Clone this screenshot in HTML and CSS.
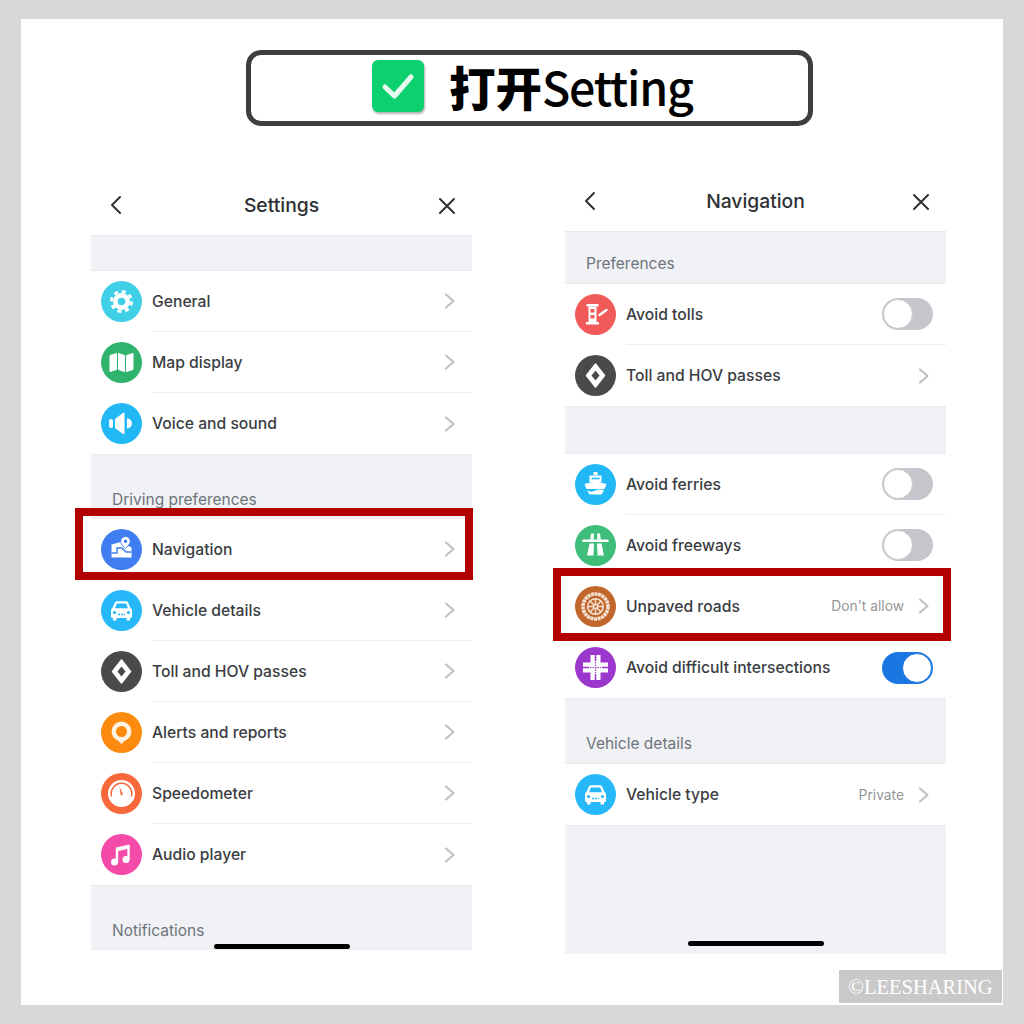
FILE: index.html
```html
<!DOCTYPE html>
<html lang="zh">
<head>
  <meta charset="UTF-8" />
  <title>打开Setting</title>
  <link rel="stylesheet" href="styles.css">
</head>
<body>
  <svg class="defs" width="0" height="0">
    <symbol id="chev" viewBox="0 0 12 18"><path d="M2 2.500l7.500 6.500-7.500 6.500" fill="none" stroke="#c0c1c5" stroke-width="2.200" stroke-linecap="round" stroke-linejoin="round"/></symbol>
    <symbol id="toll" viewBox="0 0 41 41"><circle cx="20.500" cy="20.500" r="20.500" fill="#4a4a4a"/><path d="M20.500 9l9 11.500-9 11.500-9-11.500z" fill="#fff" stroke="#fff" stroke-width="1.500" stroke-linejoin="round"/><path d="M20.500 15.500l4 5-4 5-4-5z" fill="#4a4a4a"/></symbol>
    <symbol id="car" viewBox="0 0 41 41"><circle cx="20.500" cy="20.500" r="20.500" fill="#26b8f8"/><path d="M11.500 18l2.200-5c.4-1 1.200-1.700 2.300-1.700h9c1.100 0 1.900.7 2.300 1.700l2.200 5c1.200.5 1.500 1.500 1.500 3v5.500c0 1-.5 1.500-1.500 1.500h-18c-1 0-1.500-.5-1.500-1.500V21c0-1.500.3-2.500 1.500-3z" fill="#fff"/><path d="M14 18.300l1.800-4.800h9.400l1.800 4.800z" fill="#26b8f8"/><path d="M12 28h3.500v2.500H12zM25.500 28H29v2.500h-3.500z" fill="#fff"/><circle cx="13.500" cy="22.500" r="1.600" fill="#26b8f8"/><circle cx="27.500" cy="22.500" r="1.600" fill="#26b8f8"/><path d="M17 24.500h7" stroke="#26b8f8" stroke-width="1.400" stroke-dasharray="2 1"/></symbol>
  </svg>

  <div class="sheet">
    <div class="banner">
      <span class="tick">
        <svg width="52" height="52" viewBox="0 0 52 52"><path d="M13 27l9.500 9L39 17" fill="none" stroke="#e6f9ee" stroke-width="5" stroke-linecap="round" stroke-linejoin="round"/></svg>
      </span>
      <span class="banner-text"><b>打开</b><span class="banner-en">Setting</span></span>
    </div>

    <div class="phones">
      <!-- left screen -->
      <div class="phone phone-left">
        <div class="top">
          <svg class="back" width="12" height="20" viewBox="0 0 12 20"><path d="M10 2L2 10l8 8" fill="none" stroke="#2e3034" stroke-width="2" stroke-linecap="round" stroke-linejoin="round"/></svg>
          <span class="top-title">Settings</span>
          <svg class="close" width="18" height="18" viewBox="0 0 18 18"><path d="M2 2l14 14M16 2L2 16" fill="none" stroke="#2e3034" stroke-width="2" stroke-linecap="round"/></svg>
        </div>
        <div class="band band-empty"></div>
        <div class="row">
          <svg class="ico" viewBox="0 0 41 41"><circle cx="20.500" cy="20.500" r="20.500" fill="#3fd0e8"/><circle cx="20.500" cy="20.500" r="8.500" fill="#fff"/><circle cx="20.500" cy="20.500" r="10" fill="none" stroke="#fff" stroke-width="3" stroke-dasharray="4 3.850"/><circle cx="20.500" cy="20.500" r="3.800" fill="#3fd0e8"/></svg>
          <div class="row-body"><span class="name">General</span><svg class="chev"><use href="#chev"/></svg></div>
        </div>
        <div class="row">
          <svg class="ico" viewBox="0 0 41 41"><circle cx="20.500" cy="20.500" r="20.500" fill="#2fb36d"/><path d="M9 13.500l6.500-2v16l-6.500 2zM17.500 11.500l6 2v16l-6-2zM25.500 13.500l6.500-2v16l-6.500 2z" fill="#fff" stroke="#fff" stroke-linejoin="round"/></svg>
          <div class="row-body"><span class="name">Map display</span><svg class="chev"><use href="#chev"/></svg></div>
        </div>
        <div class="row row-last">
          <svg class="ico" viewBox="0 0 41 41"><circle cx="20.500" cy="20.500" r="20.500" fill="#22b8f6"/><rect x="8" y="16" width="4" height="9" rx="2" fill="#fff"/><path d="M14 16l8-6c.7-.5 1.500-.1 1.500.8v19.400c0 .9-.8 1.300-1.500.8l-8-6z" fill="#fff"/><path d="M26 15.500a5 5 0 0 1 0 10z" fill="#fff"/></svg>
          <div class="row-body"><span class="name">Voice and sound</span><svg class="chev"><use href="#chev"/></svg></div>
        </div>
        <div class="band band-tall"><span class="band-label">Driving preferences</span></div>
        <div class="row">
          <svg class="ico" viewBox="0 0 41 41"><circle cx="20.500" cy="20.500" r="20.500" fill="#3f7df0"/><path d="M10.500 15.500l9.500-2.500 10.500 5.500v10h-20z" fill="#fff"/><path d="M10.500 24H16v-5h5l4 4h5.500" fill="none" stroke="#3f7df0" stroke-width="1.400"/><path d="M24.500 7.500a4.800 4.800 0 0 1 4.800 4.800c0 3-4.800 7.200-4.800 7.200s-4.800-4.200-4.800-7.200a4.800 4.800 0 0 1 4.800-4.800z" fill="#fff" stroke="#3f7df0"/><circle cx="24.500" cy="12.300" r="1.700" fill="#3f7df0"/></svg>
          <div class="row-body"><span class="name">Navigation</span><svg class="chev"><use href="#chev"/></svg></div>
          <div class="mark"></div>
        </div>
        <div class="row">
          <svg class="ico"><use href="#car"/></svg>
          <div class="row-body"><span class="name">Vehicle details</span><svg class="chev"><use href="#chev"/></svg></div>
        </div>
        <div class="row">
          <svg class="ico"><use href="#toll"/></svg>
          <div class="row-body"><span class="name">Toll and HOV passes</span><svg class="chev"><use href="#chev"/></svg></div>
        </div>
        <div class="row">
          <svg class="ico" viewBox="0 0 41 41"><circle cx="20.500" cy="20.500" r="20.500" fill="#fb8a0e"/><path d="M20.500 9.500a10 10 0 0 1 3 19.500l-3 3-3-3a10 10 0 0 1 3-19.500z" fill="#fff3e3"/><circle cx="20.500" cy="19.500" r="5.500" fill="#fb8a0e"/></svg>
          <div class="row-body"><span class="name">Alerts and reports</span><svg class="chev"><use href="#chev"/></svg></div>
        </div>
        <div class="row">
          <svg class="ico" viewBox="0 0 41 41"><circle cx="20.500" cy="20.500" r="20.500" fill="#f7693a"/><circle cx="20.500" cy="20.500" r="13.500" fill="#fff"/><path d="M10.600 23.500a10.300 10.300 0 1 1 19.800 0" fill="none" stroke="#f7693a" stroke-width="1.500"/><path d="M18.500 13.500l3.500 8-2.200 1z" fill="#f7693a"/></svg>
          <div class="row-body"><span class="name">Speedometer</span><svg class="chev"><use href="#chev"/></svg></div>
        </div>
        <div class="row row-last">
          <svg class="ico" viewBox="0 0 41 41"><circle cx="20.500" cy="20.500" r="20.500" fill="#f54ba8"/><path d="M15 13.500l13.500-3v4l-13.500 3z" fill="#fff"/><path d="M16 15v13M27.500 12v13" stroke="#fff" stroke-width="2.400"/><circle cx="13.500" cy="28" r="3.500" fill="#fff"/><circle cx="25" cy="25.500" r="3.500" fill="#fff"/></svg>
          <div class="row-body"><span class="name">Audio player</span><svg class="chev"><use href="#chev"/></svg></div>
        </div>
        <div class="band band-tall"><span class="band-label">Notifications</span></div>
        <div class="home"></div>
      </div>

      <!-- right screen -->
      <div class="phone phone-right">
        <div class="top">
          <svg class="back" width="12" height="20" viewBox="0 0 12 20"><path d="M10 2L2 10l8 8" fill="none" stroke="#2e3034" stroke-width="2" stroke-linecap="round" stroke-linejoin="round"/></svg>
          <span class="top-title">Navigation</span>
          <svg class="close" width="18" height="18" viewBox="0 0 18 18"><path d="M2 2l14 14M16 2L2 16" fill="none" stroke="#2e3034" stroke-width="2" stroke-linecap="round"/></svg>
        </div>
        <div class="band band-pref"><span class="band-label">Preferences</span></div>
        <div class="row">
          <svg class="ico" viewBox="0 0 41 41"><circle cx="20.500" cy="20.500" r="20.500" fill="#f25a5a"/><path d="M11.500 10h12v2.500h-12zM11 28h13v2.500H11z" fill="#fff"/><path d="M13.500 12.500h8V28h-8z" fill="#fff"/><rect x="15.500" y="15" width="4" height="3.500" fill="#f25a5a"/><rect x="15.500" y="21" width="4" height="3.500" fill="#f25a5a"/><path d="M24.500 21l7-5" stroke="#fff" stroke-width="2.400" stroke-linecap="round"/></svg>
          <div class="row-body"><span class="name">Avoid tolls</span><span class="toggle"></span></div>
        </div>
        <div class="row row-last">
          <svg class="ico"><use href="#toll"/></svg>
          <div class="row-body"><span class="name">Toll and HOV passes</span><svg class="chev"><use href="#chev"/></svg></div>
        </div>
        <div class="band band-gap"></div>
        <div class="row">
          <svg class="ico" viewBox="0 0 41 41"><circle cx="20.500" cy="20.500" r="20.500" fill="#22b8f6"/><path d="M18.500 8h4v3h-4z" fill="#fff"/><path d="M14.500 11.500h12v7h-12z" fill="#fff"/><path d="M16.500 14.500h8" stroke="#22b8f6" stroke-width="1.600"/><path d="M9.500 20l11-2.500 11 2.500-2 5h-18z" fill="#fff"/><path d="M12 26.500c3 1.500 5.500 1.500 8.500 0s5.500-1.500 8.500 0l-2.500 4h-12z" fill="#fff"/></svg>
          <div class="row-body"><span class="name">Avoid ferries</span><span class="toggle"></span></div>
        </div>
        <div class="row">
          <svg class="ico" viewBox="0 0 41 41"><circle cx="20.500" cy="20.500" r="20.500" fill="#3fbd7a"/><path d="M7.500 14.500h26v2.500h-26z" fill="#fff"/><path d="M16 8.500h3l-.3 6h-3.500zM22 8.500h3l.8 6h-3.500z" fill="#fff"/><path d="M14.500 18.500h4.500l-.5 12H12zM22 18.500h4.500l2.500 12h-6.500z" fill="#fff"/></svg>
          <div class="row-body"><span class="name">Avoid freeways</span><span class="toggle"></span></div>
        </div>
        <div class="row">
          <svg class="ico" viewBox="0 0 41 41"><circle cx="20.500" cy="20.500" r="20.500" fill="#c1662c"/><circle cx="20.500" cy="20.500" r="12.500" fill="none" stroke="#f6e3d4" stroke-width="3.500" stroke-dasharray="3 .6"/><circle cx="20.500" cy="20.500" r="7.800" fill="none" stroke="#f6e3d4" stroke-width="1.500"/><circle cx="20.500" cy="20.500" r="2" fill="none" stroke="#f6e3d4" stroke-width="1.400"/><path d="M20.500 12.700v5.800M20.500 22.500v5.800M12.700 20.500h5.800M22.500 20.500h5.800M15 15l4 4M22 22l4 4M26 15l-4 4M19 22l-4 4" stroke="#f6e3d4" stroke-width="1.400"/></svg>
          <div class="row-body"><span class="name">Unpaved roads</span><span class="value">Don't allow</span><svg class="chev"><use href="#chev"/></svg></div>
          <div class="mark"></div>
        </div>
        <div class="row row-last">
          <svg class="ico" viewBox="0 0 41 41"><circle cx="20.500" cy="20.500" r="20.500" fill="#9b37cc"/><path d="M20.500 8v25M8 20.500h25" fill="none" stroke="#fff" stroke-width="10"/><path d="M20.500 8v6M20.500 27v6M8 20.500h6M27 20.500h6" stroke="#9b37cc" stroke-width="1.500"/><path d="M15 20.500h11M20.500 15v11" stroke="#9b37cc" stroke-width="1.200" stroke-dasharray="1.500 1"/></svg>
          <div class="row-body"><span class="name">Avoid difficult intersections</span><span class="toggle toggle-on"></span></div>
        </div>
        <div class="band band-vehicle"><span class="band-label">Vehicle details</span></div>
        <div class="row row-last">
          <svg class="ico"><use href="#car"/></svg>
          <div class="row-body"><span class="name">Vehicle type</span><span class="value">Private</span><svg class="chev"><use href="#chev"/></svg></div>
        </div>
        <div class="band band-end"></div>
        <div class="home"></div>
      </div>
    </div>

    <div class="stamp">©LEESHARING</div>
  </div>
</body>
</html>
```

FILE: styles.css
```css
body {
  margin: 0;
  background-color: #d8d8d8;
  font-family: 'Inter', 'Noto Sans', sans-serif;
  color: #3a3d42;
}
.defs {
  position: absolute;
}
.sheet {
  position: relative;
  box-sizing: border-box;
  width: 982px;
  height: 986px;
  margin: 19px 0 0 21px;
  padding-top: 31px;
  background-color: #fff;
}
.banner {
  display: flex;
  align-items: center;
  box-sizing: border-box;
  width: 567px;
  height: 76px;
  margin-left: 225px;
  padding: 0 0 4px 121px;
  border: 5px solid #3e3e3e;
  border-radius: 15px;
}
.tick {
  display: block;
  width: 52px;
  height: 52px;
  margin-right: 25px;
  border-radius: 6px;
  background-color: #0dd16e;
  box-shadow: 1px 2px 2px rgba(0, 0, 0, 0.3);
}
.banner-text {
  font-family: 'Noto Sans CJK SC', sans-serif;
  font-size: 46.500px;
  line-height: 1;
  color: #000;
}
.banner-text b {
  font-weight: 900;
}
.banner-en {
  font-weight: 500;
  letter-spacing: -1.200px;
}
.phones {
  display: flex;
  gap: 93px;
  margin-top: 45px;
  padding-left: 70px;
}
.phone {
  position: relative;
  display: flex;
  flex-direction: column;
  width: 381px;
}
.phone-left {
  height: 775px;
  margin-top: 4px;
}
.phone-right {
  height: 783px;
}
.top {
  display: flex;
  align-items: center;
  justify-content: center;
  position: relative;
  height: 60px;
}
.top-title {
  font-size: 19.300px;
  font-weight: 500;
  color: #2e3034;
}
.back {
  position: absolute;
  left: 19px;
  top: 20px;
}
.close {
  position: absolute;
  right: 16px;
  top: 22px;
}
.band {
  display: flex;
  align-items: flex-end;
  box-sizing: border-box;
  padding: 0 0 9px 21px;
  background-color: #f0f2f5;
  border-top: 1px solid #e8eaed;
  border-bottom: 1px solid #e8eaed;
}
.band-empty {
  height: 36px;
}
.band-tall {
  height: 65px;
  padding-bottom: 8px;
}
.band-vehicle {
  height: 66px;
}
.band-pref {
  height: 53px;
}
.band-gap {
  height: 48px;
}
.band-end {
  flex: 1;
  border-bottom: none;
}
.band-label {
  font-size: 15.500px;
  line-height: 20px;
  color: #6f747b;
}
.row {
  position: relative;
  display: flex;
  align-items: center;
  flex: none;
  height: 61px;
  padding-left: 10px;
}
.ico {
  flex: none;
  width: 41px;
  height: 41px;
  margin-right: 10px;
}
.row-body {
  display: flex;
  align-items: center;
  flex: 1;
  box-sizing: border-box;
  height: 61px;
  padding-right: 13px;
  border-bottom: 1px solid #eeeef0;
}
.row-last .row-body {
  border-bottom: none;
}
.name {
  flex: 1;
  font-size: 15.700px;
  font-weight: 500;
}
.value {
  margin-right: 14px;
  font-size: 13.800px;
  color: #96979b;
}
.chev {
  flex: none;
  width: 12px;
  height: 18px;
  margin-right: 3px;
}
.toggle {
  position: relative;
  flex: none;
  width: 51px;
  height: 32px;
  border-radius: 16px;
  background-color: #c5c6cb;
}
.toggle::after {
  content: "";
  position: absolute;
  left: 1px;
  top: 1px;
  box-sizing: border-box;
  width: 30px;
  height: 30px;
  border: 1px solid #c9cacd;
  border-radius: 50%;
  background-color: #fff;
}
.toggle-on {
  background-color: #1a76e0;
}
.toggle-on::after {
  left: 20px;
  border-color: #1a76e0;
}
.mark {
  position: absolute;
  left: -16px;
  right: -1px;
  top: -11px;
  bottom: 0;
  border: 8px solid #b30000;
  pointer-events: none;
}
.phone-right .mark {
  left: -12px;
  right: -5px;
  top: -8px;
  bottom: -4px;
}
.home {
  position: absolute;
  left: 123px;
  bottom: 1px;
  width: 136px;
  height: 5px;
  border-radius: 3px;
  background-color: #000;
}
.phone-right .home {
  bottom: 8px;
}
.stamp {
  position: absolute;
  right: 1px;
  bottom: 2px;
  width: 163px;
  height: 33px;
  background-color: #c9c9c9;
  font-family: 'Liberation Serif', serif;
  font-size: 20.500px;
  line-height: 35px;
  text-align: center;
  color: #fff;
}
```
